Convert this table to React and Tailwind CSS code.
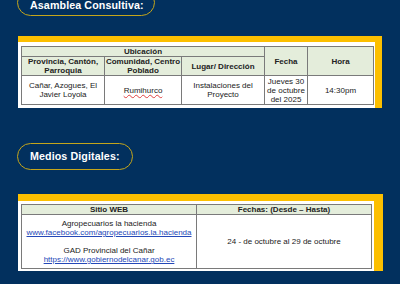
const th = "border border-[#7a7a7a] bg-[#e4eddb] font-bold text-center align-middle p-0";
const td = "border border-[#7a7a7a] bg-white text-center align-middle p-0";

const Pill = ({ children, className = "" }) => (
    <div className={`h-[27px] w-fit rounded-full border-[1.5px] border-[#c4a51b] flex items-center px-[12px] text-white font-bold text-[10.7px] tracking-[0.1px] ${className}`}>
        {children}
    </div>
);

const Link = ({ children }) => (
    <span className="text-[#2448b8] underline decoration-[#2448b8]">{children}</span>
);

export default function App() {
    return (
        <div className="w-[400px] h-[284px] overflow-hidden bg-[#02305e] pl-[18px] text-[8px] leading-[9px] text-[#222] font-['Liberation_Sans',Arial,sans-serif]">
            <Pill className="-mt-[11px] ml-[-1px] pr-[10px] pt-[5px]">Asamblea Consultiva:</Pill>

            <section className="mt-[20px] w-[364px] border-t-[6px] border-r-[7px] border-[#fcbf00] bg-white pt-[4px] pb-[3px] pl-[3px] pr-[2px]">
                <table className="table-fixed border-collapse w-[352px] border border-[#a0a0a0]">
                    <colgroup>
                        <col className="w-[83px]" />
                        <col className="w-[77px]" />
                        <col className="w-[83px]" />
                        <col className="w-[43px]" />
                        <col className="w-[66px]" />
                    </colgroup>
                    <thead>
                        <tr className="h-[10px]">
                            <th colSpan={3} className={th}>Ubicación</th>
                            <th rowSpan={2} className={th}>Fecha</th>
                            <th rowSpan={2} className={th}>Hora</th>
                        </tr>
                        <tr className="h-[19px]">
                            <th className={th}>Provincia, Cantón,<br />Parroquia</th>
                            <th className={th}>Comunidad, Centro<br />Poblado</th>
                            <th className={th}>Lugar/ Dirección</th>
                        </tr>
                    </thead>
                    <tbody>
                        <tr className="h-[29px]">
                            <td className={td}>Cañar, Azogues, El<br />Javier Loyola</td>
                            <td className={td}>
                                <span className="underline decoration-wavy decoration-[#e04040] decoration-[0.5px]">Rumihurco</span>
                            </td>
                            <td className={td}>Instalaciones del<br />Proyecto</td>
                            <td className={td}>Jueves 30<br />de octubre<br />del 2025</td>
                            <td className={td}>14:30pm</td>
                        </tr>
                    </tbody>
                </table>
            </section>

            <Pill className="mt-[35px] ml-[-1px]">Medios Digitales:</Pill>

            <section className="mt-[24px] w-[365px] border-t-[7px] border-r-[9px] border-[#fcbf00] bg-white pt-[3px] pb-[2px] pl-[3px] pr-[3px]">
                <table className="table-fixed border-collapse w-[350px] border border-[#a0a0a0]">
                    <colgroup>
                        <col className="w-[175px]" />
                        <col className="w-[175px]" />
                    </colgroup>
                    <thead>
                        <tr className="h-[10px]">
                            <th className={th}>Sitio WEB</th>
                            <th className={th}>Fechas: (Desde – Hasta)</th>
                        </tr>
                    </thead>
                    <tbody>
                        <tr className="h-[54px]">
                            <td className={td}>
                                <div>Agropecuarios la hacienda</div>
                                <div><Link>www.facebook.com/agropecuarios.la.hacienda</Link></div>
                                <div className="h-[9px]" />
                                <div>GAD Provincial del Cañar</div>
                                <div><Link>https://www.gobiernodelcanar.gob.ec</Link></div>
                            </td>
                            <td className={td}>24 - de octubre al 29 de octubre</td>
                        </tr>
                    </tbody>
                </table>
            </section>
        </div>
    );
}
